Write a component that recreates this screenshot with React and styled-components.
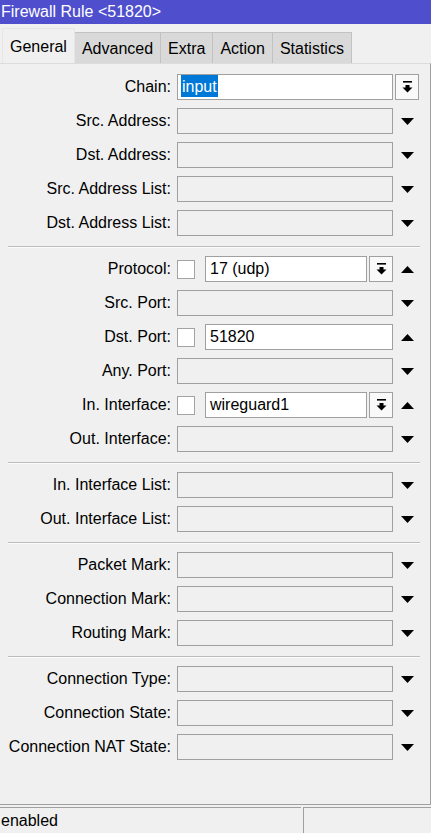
import * as React from 'react';
import styled, { createGlobalStyle } from 'styled-components';

const GlobalStyle = createGlobalStyle`
  html, body {
    margin: 0;
    padding: 0;
    background: #f0f0f0;
  }
  body {
    font-family: "Liberation Sans", Arial, sans-serif;
    font-size: 16px;
    color: #000;
  }
`;

const Window = styled.div`
  width: 431px;
  height: 833px;
  display: flex;
  flex-direction: column;
  background: #f0f0f0;
  overflow: hidden;
`;

const TitleBar = styled.div`
  height: 24px;
  line-height: 24px;
  padding-left: 1px;
  background: #4f4fcd;
  color: #fff;
  white-space: nowrap;
`;

const TabStrip = styled.div`
  height: 39px;
  display: flex;
  align-items: flex-end;
  padding-left: 2px;
  box-sizing: border-box;
`;

const Tab = styled.div`
  box-sizing: border-box;
  height: ${({ $active }) => ($active ? '35px' : '31px')};
  line-height: ${({ $active }) => ($active ? '35px' : '31px')};
  padding: 0 7px;
  margin-left: -1px;
  background: ${({ $active }) => ($active ? '#f0f0f0' : '#d9d9d9')};
  border: 1px solid ${({ $active }) => ($active ? '#e6e6e6' : '#c2c2c2')};
  border-bottom: none;
  position: relative;
  z-index: ${({ $active }) => ($active ? 2 : 1)};
  white-space: nowrap;

  &:first-child {
    margin-left: 0;
  }
`;

const Panel = styled.div`
  box-sizing: border-box;
  height: 742px;
  width: 431px;
  padding-top: 10px;
  border-top: 1px solid #dcdcdc;
  border-right: 1px solid #a0a0a0;
  border-bottom: 1px solid #a0a0a0;
  display: flex;
  flex-direction: column;
`;

const Section = styled.div`
  display: flex;
  flex-direction: column;
  gap: 8px;
`;

const Divider = styled.div`
  height: 0;
  margin: 10px 10px 8px 8px;
  border-top: 1px solid #bcbcbc;
  border-bottom: 1px solid #fbfbfb;
`;

const Row = styled.div`
  display: flex;
  align-items: center;
  height: 26px;
`;

const Label = styled.div`
  width: 171px;
  flex-shrink: 0;
  text-align: right;
  white-space: nowrap;
`;

const Fields = styled.div`
  width: 216px;
  margin-left: 6px;
  display: flex;
  align-items: center;
  height: 26px;
`;

const CheckBox = styled.div`
  box-sizing: border-box;
  width: 18px;
  height: 19px;
  margin-right: 10px;
  background: #fff;
  border: 1px solid #a3a3a3;
  flex-shrink: 0;
`;

const Input = styled.div`
  box-sizing: border-box;
  flex: 1;
  height: 26px;
  line-height: 24px;
  padding-left: ${({ $pad }) => $pad || 4}px;
  background: ${({ $filled }) => ($filled ? '#fff' : '#f0f0f0')};
  border: 1px solid #a0a0a0;
  white-space: nowrap;
  overflow: hidden;
`;

const Selected = styled.span`
  background: #0078d7;
  color: #fff;
  padding: 3px 1px 2px;
`;

const DropButton = styled.div`
  box-sizing: border-box;
  width: 24px;
  height: 26px;
  margin-left: 2px;
  flex-shrink: 0;
  background: #f9f9f9;
  border: 1px solid #a0a0a0;
  display: flex;
  align-items: center;
  justify-content: center;
`;

const Slot = styled.div`
  width: 24px;
  height: 26px;
  margin-left: 2px;
  display: flex;
  align-items: center;
  justify-content: center;

  & > ${DropButton} {
    margin-left: 0;
  }
`;

const StatusBar = styled.div`
  height: 26px;
  margin-top: 2px;
  display: flex;
`;

const StatusPane = styled.div`
  box-sizing: border-box;
  width: ${({ $w }) => ($w ? `${$w}px` : 'auto')};
  flex: ${({ $w }) => ($w ? 'none' : '1')};
  margin-left: ${({ $w }) => ($w ? '0' : '2px')};
  border-top: 1px solid #a0a0a0;
  border-left: ${({ $w }) => ($w ? 'none' : '1px solid #a0a0a0')};
  padding-left: 1px;
  line-height: 26px;
`;

const DropIcon = () => (
  <svg width="11" height="12" viewBox="0 0 11 12">
    <rect x="1" y="0" width="9" height="1.6" fill="#000" />
    <rect x="3.5" y="4" width="4" height="3" fill="#000" />
    <polygon points="0.5,6.5 10.5,6.5 5.5,11.5" fill="#000" />
  </svg>
);

const Arrow = ({ up }) => (
  <svg width="13" height="7" viewBox="0 0 13 7">
    {up ? (
      <polygon points="0,7 13,7 6.5,0" fill="#000" />
    ) : (
      <polygon points="0,0 13,0 6.5,7" fill="#000" />
    )}
  </svg>
);

const sections = [
  [
    { label: 'Chain', value: 'input', selected: true, button: 'slot' },
    { label: 'Src. Address' },
    { label: 'Dst. Address' },
    { label: 'Src. Address List' },
    { label: 'Dst. Address List' },
  ],
  [
    { label: 'Protocol', check: true, value: '17 (udp)', button: 'field', up: true },
    { label: 'Src. Port' },
    { label: 'Dst. Port', check: true, value: '51820', up: true },
    { label: 'Any. Port' },
    { label: 'In. Interface', check: true, value: 'wireguard1', button: 'field', up: true },
    { label: 'Out. Interface' },
  ],
  [
    { label: 'In. Interface List' },
    { label: 'Out. Interface List' },
  ],
  [
    { label: 'Packet Mark' },
    { label: 'Connection Mark' },
    { label: 'Routing Mark' },
  ],
  [
    { label: 'Connection Type' },
    { label: 'Connection State' },
    { label: 'Connection NAT State' },
  ],
];

const tabs = ['General', 'Advanced', 'Extra', 'Action', 'Statistics'];

const FieldRow = ({ row }) => (
  <Row>
    <Label>{row.label}:</Label>
    <Fields>
      {row.check && <CheckBox />}
      <Input $filled={!!row.value} $pad={row.selected ? 3 : 4}>
        {row.selected ? <Selected>{row.value}</Selected> : row.value}
      </Input>
      {row.button === 'field' && (
        <DropButton>
          <DropIcon />
        </DropButton>
      )}
    </Fields>
    <Slot>
      {row.button === 'slot' ? (
        <DropButton>
          <DropIcon />
        </DropButton>
      ) : (
        <Arrow up={row.up} />
      )}
    </Slot>
  </Row>
);

const App = () => {
  return (
    <>
      <GlobalStyle />
      <Window>
        <TitleBar>Firewall Rule &lt;51820&gt;</TitleBar>
        <TabStrip>
          {tabs.map((t, i) => (
            <Tab key={t} $active={i === 0}>{t}</Tab>
          ))}
        </TabStrip>
        <Panel>
          {sections.map((rows, i) => (
            <React.Fragment key={i}>
              {i > 0 && <Divider />}
              <Section>
                {rows.map((row) => (
                  <FieldRow key={row.label} row={row} />
                ))}
              </Section>
            </React.Fragment>
          ))}
        </Panel>
        <StatusBar>
          <StatusPane $w={301}>enabled</StatusPane>
          <StatusPane />
        </StatusBar>
      </Window>
    </>
  );
};

export default App;
